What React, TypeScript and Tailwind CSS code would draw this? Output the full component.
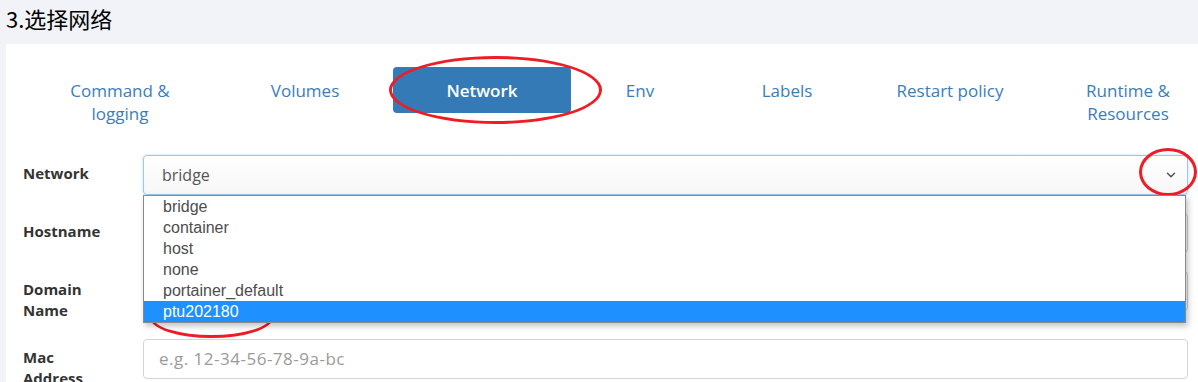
import React from 'react';
import { ChevronDown } from 'lucide-react';

const tabs = [
  { lines: ['Command &', 'logging'], w: 'w-[194px]' },
  { lines: ['Volumes'], w: 'w-[176px]' },
  { lines: ['Network'], w: 'w-[178px]', active: true },
  { lines: ['Env'], w: 'w-[138px]' },
  { lines: ['Labels'], w: 'w-[156px]' },
  { lines: ['Restart policy'], w: 'w-[170px]' },
  { lines: ['Runtime &', 'Resources'], w: 'w-[186px]' },
];

const options = ['bridge', 'container', 'host', 'none', 'portainer_default', 'ptu202180'];

const sans = { fontFamily: '"Open Sans", "Noto Sans", sans-serif' };

const Row: React.FC<{ label: string; children: React.ReactNode }> = ({ label, children }) => (
  <div className="flex items-start">
    <label className="w-[120px] shrink-0 pt-[8px] pr-[32px] text-[15px] font-bold leading-[21px] text-[#333]">
      {label}
    </label>
    <div className="relative flex-1">{children}</div>
  </div>
);

const App: React.FC = () => {
  return (
    <div className="w-[1198px] h-[382px] overflow-hidden bg-[#f2f3f8]" style={sans}>
      <div
        className="h-[44px] pl-[6px] pt-[4px] text-[22px] leading-[28px] text-black"
        style={{ fontFamily: '"Noto Sans CJK SC", "Noto Sans", sans-serif' }}
      >
        3.选择网络
      </div>

      <div className="relative ml-[6px] h-[338px] bg-white pl-[17px] pr-[10px] pt-[23px]">
        {/* tabs */}
        <div className="flex items-start">
          {tabs.map((t) => (
            <div key={t.lines.join(' ')} className={`${t.w} shrink-0`}>
              <div
                className={`rounded-[4px] px-[12px] py-[11.5px] text-center text-[17px] font-medium leading-[23px] ${
                  t.active ? 'bg-[#337ab7] font-semibold text-white' : 'text-[#3a7dbd]'
                }`}
              >
                {t.lines.map((l) => (
                  <span key={l} className="block whitespace-nowrap">
                    {l}
                  </span>
                ))}
              </div>
            </div>
          ))}
        </div>

        {/* form */}
        <div className="mt-[19px] flex flex-col gap-[18px]">
          <Row label="Network">
            <div className="flex h-[40px] items-center justify-between rounded-[4px] border border-[#9cc8ec] bg-gradient-to-b from-white to-[#f7f7f7] pl-[18px] pr-[9px] text-[16px] text-[#555] shadow-[0_0_3px_rgba(102,175,233,0.45)]">
              <span>bridge</span>
              <ChevronDown size={14} strokeWidth={2.6} className="text-[#555]" />
            </div>
            <ul
              className="absolute left-0 right-[2px] top-[40px] z-10 border border-[#8a8a8a] bg-white shadow-[2px_3px_6px_rgba(0,0,0,0.25)]"
              style={{ fontFamily: '"Liberation Sans", Arial, sans-serif' }}
            >
              {options.map((o, i) => (
                <li
                  key={o}
                  className={`h-[21px] pl-[19px] text-[16px] leading-[21px] ${
                    i === options.length - 1 ? 'bg-[#1e90ff] text-white' : 'text-[#4d4d4d]'
                  }`}
                >
                  {o}
                </li>
              ))}
            </ul>
          </Row>
          <Row label="Hostname">
            <div className="h-[40px] rounded-[4px] border border-[#ccc]" />
          </Row>
          <Row label="Domain Name">
            <div className="h-[40px] rounded-[4px] border border-[#ccc]" />
          </Row>
          <Row label="Mac Address">
            <div className="flex h-[40px] items-center rounded-[4px] border border-[#d4d4d4] pl-[15px] text-[17px] tracking-[0.5px] text-[#9a9a9a]">
              e.g. 12-34-56-78-9a-bc
            </div>
          </Row>
        </div>

        {/* red annotation ellipses */}
        <div className="pointer-events-none absolute left-[383px] top-[12px] h-[68px] w-[213px] rounded-[50%] border-[3px] border-[#ee1c24]" />
        <div className="pointer-events-none absolute left-[1133px] top-[104px] h-[48px] w-[58px] rounded-[50%] border-[3px] border-[#ee1c24]" />
        <div className="pointer-events-none absolute left-[144px] top-[253px] h-[41px] w-[123px] rounded-[50%] border-[3px] border-[#ee1c24]" />
      </div>
    </div>
  );
};

export default App;
